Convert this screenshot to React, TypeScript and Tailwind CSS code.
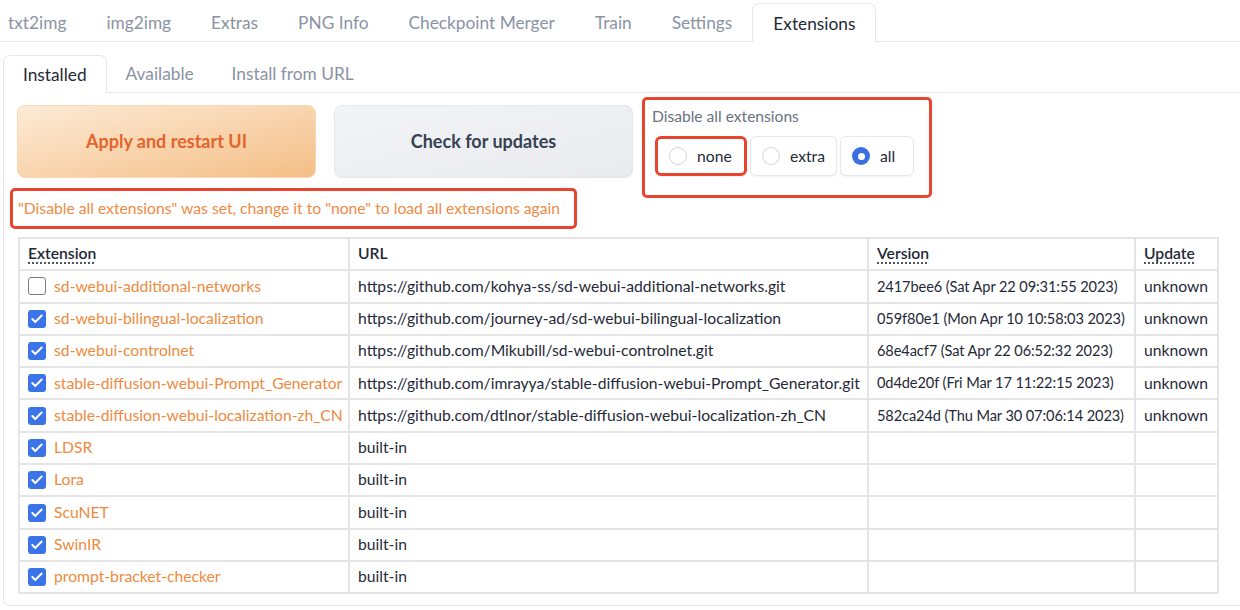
import { Check } from "lucide-react";

const TOP_TABS = ["txt2img", "img2img", "Extras", "PNG Info", "Checkpoint Merger", "Train", "Settings", "Extensions"];
const SUB_TABS = ["Installed", "Available", "Install from URL"];

type Ext = { name: string; url: string; version: string; update: string; on: boolean };

const EXTS: Ext[] = [
  { name: "sd-webui-additional-networks", url: "https://github.com/kohya-ss/sd-webui-additional-networks.git", version: "2417bee6 (Sat Apr 22 09:31:55 2023)", update: "unknown", on: false },
  { name: "sd-webui-bilingual-localization", url: "https://github.com/journey-ad/sd-webui-bilingual-localization", version: "059f80e1 (Mon Apr 10 10:58:03 2023)", update: "unknown", on: true },
  { name: "sd-webui-controlnet", url: "https://github.com/Mikubill/sd-webui-controlnet.git", version: "68e4acf7 (Sat Apr 22 06:52:32 2023)", update: "unknown", on: true },
  { name: "stable-diffusion-webui-Prompt_Generator", url: "https://github.com/imrayya/stable-diffusion-webui-Prompt_Generator.git", version: "0d4de20f (Fri Mar 17 11:22:15 2023)", update: "unknown", on: true },
  { name: "stable-diffusion-webui-localization-zh_CN", url: "https://github.com/dtlnor/stable-diffusion-webui-localization-zh_CN", version: "582ca24d (Thu Mar 30 07:06:14 2023)", update: "unknown", on: true },
  { name: "LDSR", url: "built-in", version: "", update: "", on: true },
  { name: "Lora", url: "built-in", version: "", update: "", on: true },
  { name: "ScuNET", url: "built-in", version: "", update: "", on: true },
  { name: "SwinIR", url: "built-in", version: "", update: "", on: true },
  { name: "prompt-bracket-checker", url: "built-in", version: "", update: "", on: true },
];

const td = "border-2 border-[#e5e5e5] px-[8px] h-[32.3px] whitespace-nowrap overflow-hidden";

export default function App() {
  return (
    <div className="h-[610px] w-[1240px] overflow-hidden bg-white text-[#1f2937] font-['Lato','Liberation_Sans',sans-serif]">
      {/* top tabs */}
      <nav className="flex h-[42px] items-end border-b border-[#e5e7eb] ml-[-12px]">
        {TOP_TABS.map((t) => (
          <div
            key={t}
            className={`flex h-[38px] items-center px-5 pt-[2px] text-[17.3px] ${
              t === "Extensions"
                ? "mb-[-1px] h-[39px] rounded-t-[7px] border border-b-0 border-[#e5e7eb] bg-white text-[#1f2937]"
                : "text-[#8a93a3]"
            }`}
          >
            {t}
          </div>
        ))}
      </nav>

      <div className="ml-[3px] mt-[13px]">
        {/* sub tabs */}
        <div className="flex h-[37px] items-end">
          {SUB_TABS.map((t) => (
            <div
              key={t}
              className={`flex h-[37px] items-center px-[19px] text-[17.3px] ${
                t === "Installed"
                  ? "mb-[-1px] h-[38px] rounded-t-[7px] border border-b-0 border-[#e5e7eb] bg-white text-[#1f2937]"
                  : "text-[#8a93a3]"
              }`}
            >
              {t}
            </div>
          ))}
        </div>

        {/* panel */}
        <div className="h-[514px] rounded-bl-[7px] border border-r-0 border-[#e5e7eb] pl-[13px] pt-[12px]">
          <div className="flex">
            <div className="flex flex-col">
              <div className="flex gap-[18px]">
                <button className="flex h-[73px] w-[299px] items-center justify-center rounded-[8px] border border-[#fad9b6] bg-gradient-to-br from-[#fdebd6] to-[#f4be86] text-[18px] font-bold text-[#e3652c]">
                  Apply and restart UI
                </button>
                <button className="flex h-[73px] w-[299px] items-center justify-center rounded-[8px] border border-[#e5e7eb] bg-gradient-to-br from-[#f3f4f6] to-[#e8eaee] text-[18px] font-bold text-[#374151]">
                  Check for updates
                </button>
              </div>
              <div className="ml-[-7px] mt-[10px] flex h-[41px] w-[567px] items-center rounded-[5px] border-[3px] border-[#e8452f] pl-[5px] text-[15.7px] text-[#f08a45]">
                "Disable all extensions" was set, change it to "none" to load all extensions again
              </div>
            </div>

            <div className="ml-[9px] mt-[-8px] h-[101px] w-[290px] rounded-[5px] border-[3px] border-[#e8452f] pl-[7px] pt-[5px]">
              <div className="text-[15.6px] text-[#6b7280]">Disable all extensions</div>
              <div className="mt-[8px] flex gap-[3px] pl-[3px]">
                <Radio label="none" w="w-[92px]" highlight />
                <Radio label="extra" w="w-[87px]" />
                <Radio label="all" w="w-[74px]" checked />
              </div>
            </div>
          </div>

          {/* table */}
          <table className="mt-[8px] ml-[1px] w-[1199px] table-fixed border-collapse text-[15.7px]">
            <colgroup>
              <col className="w-[330px]" />
              <col className="w-[519px]" />
              <col className="w-[267px]" />
              <col className="w-[83px]" />
            </colgroup>
            <thead>
              <tr className="text-left">
                <th className={`${td} font-semibold`}>
                  <span className="underline decoration-dotted underline-offset-[3px]">Extension</span>
                </th>
                <th className={`${td} font-semibold`}>URL</th>
                <th className={`${td} font-semibold`}>
                  <span className="underline decoration-dotted underline-offset-[3px]">Version</span>
                </th>
                <th className={`${td} font-semibold`}>
                  <span className="underline decoration-dotted underline-offset-[3px]">Update</span>
                </th>
              </tr>
            </thead>
            <tbody>
              {EXTS.map((e) => (
                <tr key={e.name}>
                  <td className={td}>
                    <div className="flex items-center gap-[8px]">
                      {e.on ? (
                        <span className="flex h-[18px] w-[18px] shrink-0 items-center justify-center rounded-[3px] bg-[#3b73e8]">
                          <Check size={14} strokeWidth={3.5} className="text-white" />
                        </span>
                      ) : (
                        <span className="h-[18px] w-[18px] shrink-0 rounded-[3px] border border-[#7b7b7b] bg-white" />
                      )}
                      <span className="text-[#ee8a3e]">{e.name}</span>
                    </div>
                  </td>
                  <td className={td}>{e.url}</td>
                  <td className={`${td} text-[14.6px] tracking-[-0.1px]`}>{e.version}</td>
                  <td className={td}>{e.update}</td>
                </tr>
              ))}
            </tbody>
          </table>
        </div>
      </div>
    </div>
  );
}

function Radio({ label, w, checked, highlight }: { label: string; w: string; checked?: boolean; highlight?: boolean }) {
  return (
    <div
      className={`flex h-[40px] ${w} items-center gap-[10px] rounded-[6px] bg-white pl-[11px] text-[15.7px] shadow-[0_1px_2px_rgba(0,0,0,0.06)] ${
        highlight ? "border-[3px] border-[#e8452f] pl-[9px]" : "border border-[#e5e7eb]"
      }`}
    >
      {checked ? (
        <span className="flex h-[18px] w-[18px] items-center justify-center rounded-full bg-[#3b6fe0]">
          <span className="h-[7px] w-[7px] rounded-full bg-white" />
        </span>
      ) : (
        <span className="h-[18px] w-[18px] rounded-full border border-[#d1d5db] bg-white" />
      )}
      <span className="text-[#1f2937]">{label}</span>
    </div>
  );
}
